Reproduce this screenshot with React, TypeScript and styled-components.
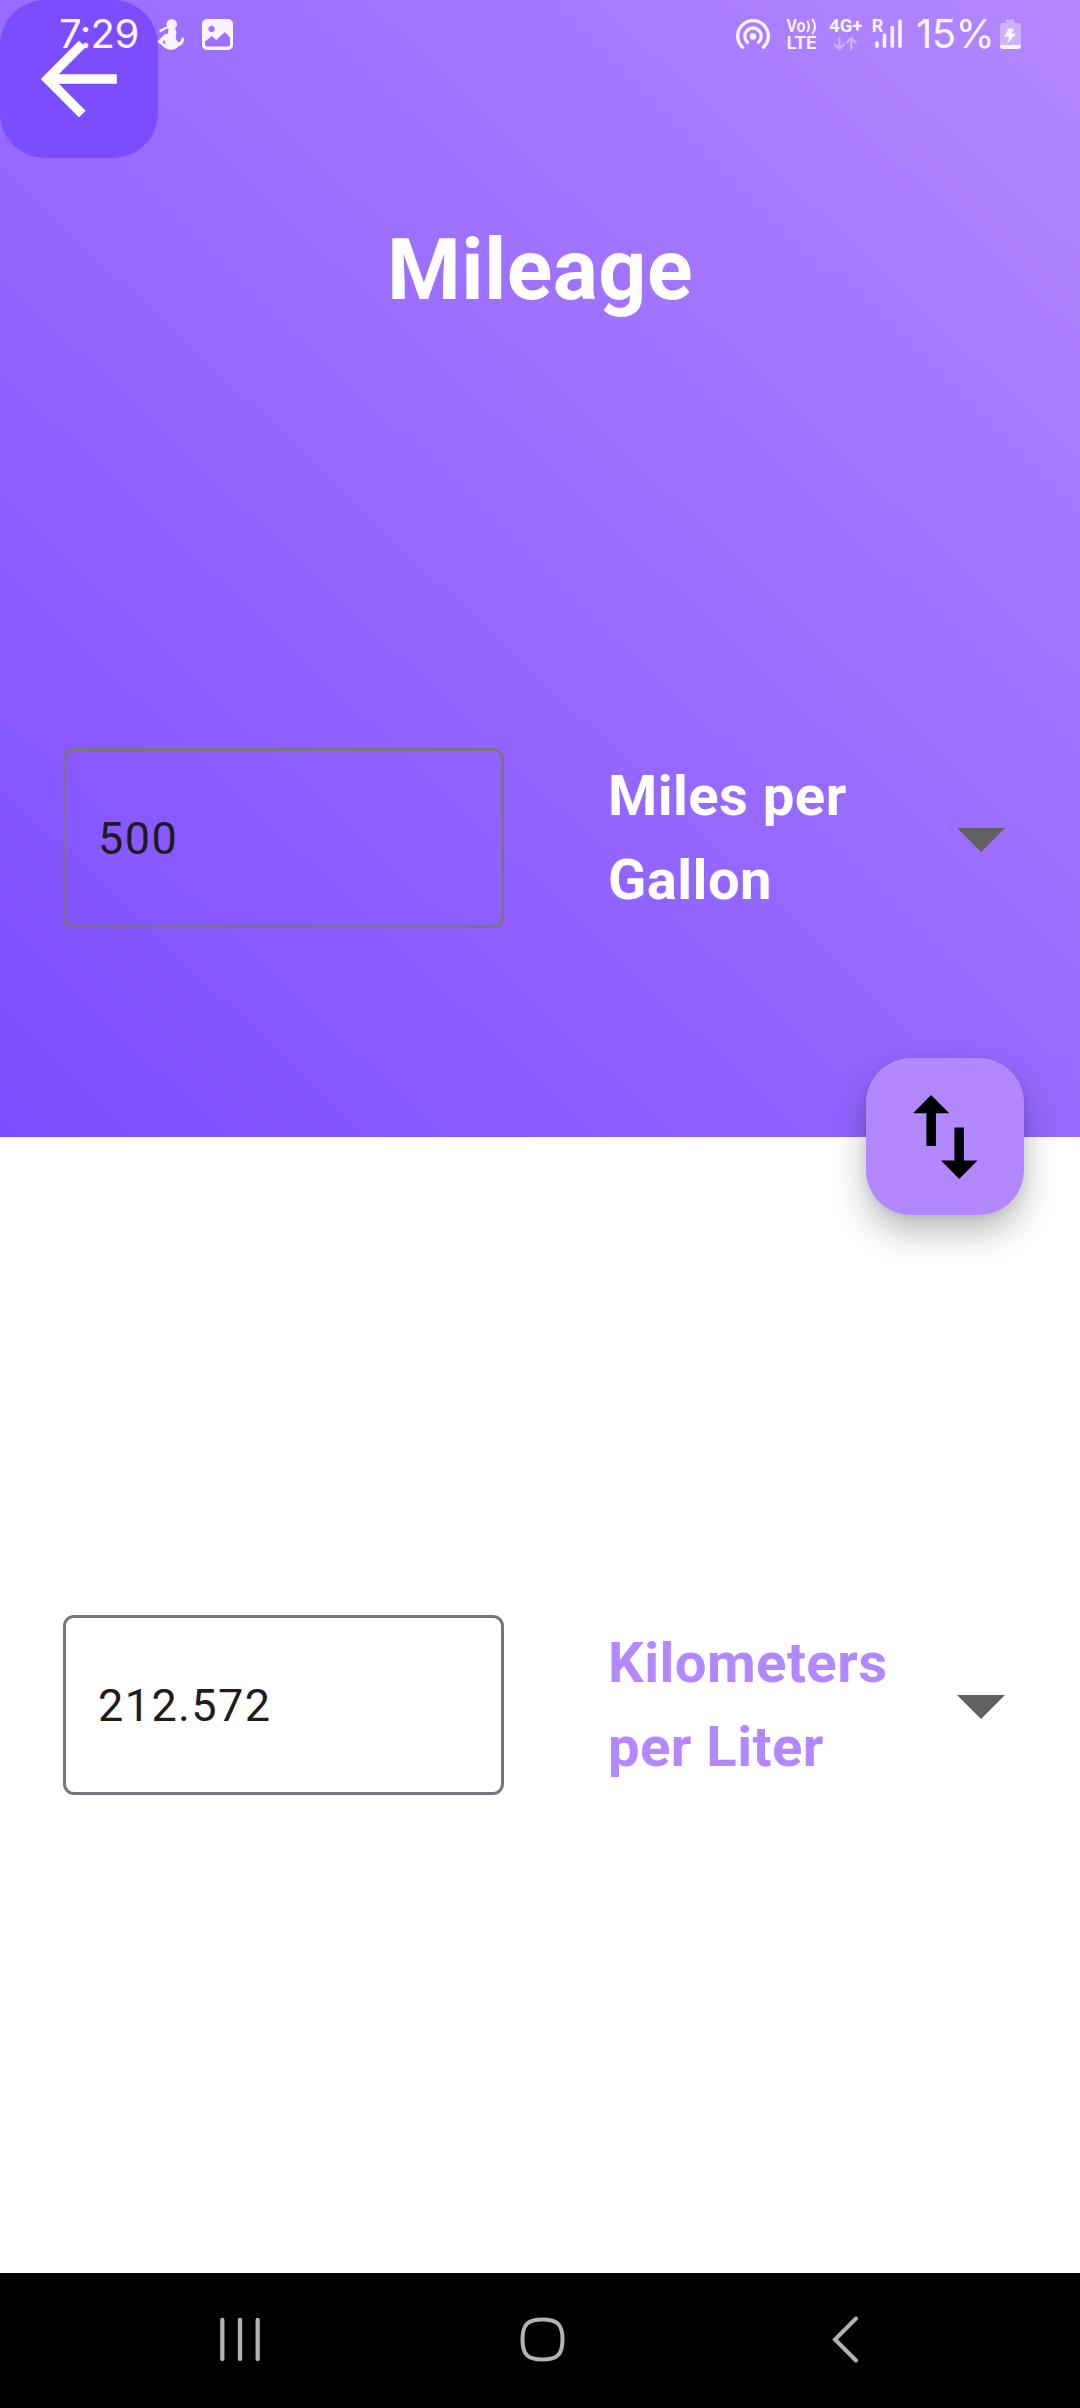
import React, { useState } from "react";
import styled, { createGlobalStyle } from "styled-components";

const GlobalStyle = createGlobalStyle`
  * { box-sizing: border-box; }
  body { margin: 0; background: #fff; }
  button { border: 0; padding: 0; background: none; cursor: pointer; font: inherit; letter-spacing: inherit; }
`;

const Screen = styled.div`
  position: relative;
  display: flex;
  flex-direction: column;
  width: 1080px;
  height: 2408px;
  overflow: hidden;
  background: #fff;
  font-family: Roboto, "Liberation Sans", sans-serif;
`;

const StatusBar = styled.header`
  position: absolute;
  z-index: 2;
  inset: 0 0 auto 0;
  height: 70px;
  display: flex;
  justify-content: space-between;
  padding: 0 57px 0 59px;
  color: #f9f4ff;
`;

const StatusGroup = styled.div`
  display: flex;
  align-items: flex-start;
`;

const StatusText = styled.span<{ $width: number }>`
  width: ${(p) => p.$width}px;
  padding-top: 10px;
  font-family: Inter, Roboto, sans-serif;
  font-size: 40px;
  line-height: 48px;
  letter-spacing: -0.6px;
  white-space: nowrap;
`;

const Glyph = styled.svg`
  display: block;
  flex: none;
  height: 70px;
`;

const Panel = styled.section<{ $tinted?: boolean }>`
  display: flex;
  flex-direction: column;
  flex: none;
  height: 1136.5px;
  background: ${(p) =>
    p.$tinted ? "linear-gradient(43.54deg, #7c4dff, #b388ff)" : "#fff"};
`;

const RoundButton = styled.button<{ $color: string }>`
  display: flex;
  align-items: center;
  justify-content: center;
  flex: none;
  width: 157.5px;
  height: 157.5px;
  border-radius: 45px;
  background: ${(p) => p.$color};
`;

const SwapButton = styled(RoundButton)`
  position: absolute;
  z-index: 1;
  top: 1057.75px;
  left: 866.25px;
  box-shadow:
    0 17px 34px rgba(0, 0, 0, 0.27),
    0 2px 8px rgba(0, 0, 0, 0.06);
`;

const Title = styled.h1`
  margin: 63px 0 0;
  color: #fff;
  font-size: 84.375px;
  line-height: 99px;
  font-weight: 700;
  letter-spacing: 0.42px;
  text-align: center;
`;

const UnitRow = styled.div<{ $top: number }>`
  display: flex;
  align-items: center;
  height: 180px;
  margin-top: ${(p) => p.$top}px;
  padding: 0 75px 0 63px;
`;

const ValueInput = styled.input`
  width: 441px;
  height: 180px;
  padding: 0 32px;
  border: 3px solid #79747e;
  border-radius: 11px;
  outline: 0;
  background: transparent;
  color: #1d1b20;
  font: 400 45px/68px Roboto, "Liberation Sans", sans-serif;
  letter-spacing: 1.4px;
`;

const UnitSelect = styled.button<{ $color: string }>`
  display: flex;
  align-items: center;
  justify-content: space-between;
  flex: 1;
  margin-left: 104px;
  color: ${(p) => p.$color};
  text-align: left;
`;

const UnitLabel = styled.span`
  width: 300px;
  font-size: 56.25px;
  line-height: 84.375px;
  font-weight: 700;
  letter-spacing: 0.42px;
`;

const Caret = styled.span`
  margin-top: 4px;
  border: 24.5px solid transparent;
  border-top-color: #616161;
  border-bottom: 0;
`;

const NavBar = styled.nav`
  display: flex;
  align-items: center;
  justify-content: space-between;
  flex: 1;
  padding: 0 205px 0 210px;
  background: #000;
`;

const NavButton = styled.button`
  display: flex;
`;

function FitnessIcon() {
  return (
    <Glyph width="30" viewBox="156 0 30 70" fill="currentColor">
      <circle cx="171.8" cy="24.3" r="5.2" />
      <path d="M160.500 31l5-3 3.500-.8" fill="none" stroke="currentColor" strokeWidth="2.200" strokeLinecap="round" />
      <path
        fillRule="evenodd"
        d="M168.500 28.500h6.500c1.700 2.400 1.700 5.200.8 7.700l.2 3.300c1.200.8 1.600 2.500 2.600 2.600 1.600 0 2.600-1.700 2.700-3.700.3-1.400 2.700-1.400 2.700.3 0 3.800-2 6.700-5.500 7.600-1.800 2.300-4.300 3.500-7.300 3.500-3.600 0-7-1.700-8.700-4l-5.300-4 7.200-7.300 3.400-.8zM162.600 42.200l3 2.400-1-4.800z"
      />
    </Glyph>
  );
}

function GalleryIcon() {
  return (
    <Glyph width="33" viewBox="201 0 33 70">
      <path
        fill="currentColor"
        fillRule="evenodd"
        d="M207 19h21a5 5 0 0 1 5 5v21a5 5 0 0 1-5 5h-21a5 5 0 0 1-5-5V24a5 5 0 0 1 5-5zm-2 22.500V44a2.500 2.500 0 0 0 2.500 2.500h20A2.500 2.500 0 0 0 230 44v-6.500l-4.500-5-1.300 0-8 7.500-4.500-4zM211.600 25.700a3.200 3.200 0 1 0 .01 0z"
      />
    </Glyph>
  );
}

function HotspotIcon() {
  return (
    <Glyph width="36" viewBox="735 0 36 70" fill="none" stroke="currentColor" strokeWidth="3.300" strokeLinecap="round">
      <circle cx="753" cy="36.500" r="3.300" fill="currentColor" stroke="none" />
      <path d="M747.500 42.300a8.200 8.200 0 1 1 11 0" />
      <path d="M742.600 47.200a15.300 15.300 0 1 1 20.800 0" />
    </Glyph>
  );
}

function VolteIcon() {
  return (
    <Glyph width="34" viewBox="785 0 34 70" fill="currentColor" fontFamily="Roboto, sans-serif" fontWeight="600">
      <text x="786.500" y="32" fontSize="17.500" textLength="19" lengthAdjust="spacingAndGlyphs">Vo</text>
      <path d="M807.500 21.500q3 5 0 10M812.500 19.500q5 7 0 14" fill="none" stroke="currentColor" strokeWidth="2" strokeLinecap="round" />
      <text x="786.500" y="49" fontSize="17.500" textLength="30" lengthAdjust="spacingAndGlyphs">LTE</text>
    </Glyph>
  );
}

function DataIcon() {
  return (
    <Glyph width="36" viewBox="828 0 36 70">
      <text x="829" y="32" fontSize="17.500" fontFamily="Roboto, sans-serif" fontWeight="700" fill="currentColor" textLength="33.500" lengthAdjust="spacingAndGlyphs">4G+</text>
      <path
        d="M839.300 38v11M834.800 44.500l4.500 4.500 4.500-4.500M851.300 49V38M846.800 42.500l4.500-4.500 4.500 4.500"
        fill="none" stroke="currentColor" strokeWidth="2.400" strokeLinecap="round" opacity=".42"
      />
    </Glyph>
  );
}

function SignalIcon() {
  return (
    <Glyph width="33" viewBox="871 0 33 70">
      <text x="871.800" y="32" fontSize="18" fontFamily="Roboto, sans-serif" fontWeight="700" fill="currentColor">R</text>
      <path d="M877 43v3.200M884.500 35v11.200M892.300 27.500v18.700M900 21v25.200" stroke="currentColor" strokeWidth="3.600" strokeLinecap="round" />
    </Glyph>
  );
}

function BatteryIcon() {
  return (
    <Glyph width="23" viewBox="1000 0 23 70" fill="currentColor">
      <path d="M1006 19.500h8.500v3.500h3.500a3 3 0 0 1 3 3v19h-21V26a3 3 0 0 1 3-3h3z" opacity=".4" />
      <path d="M1000 45h21v1a3 3 0 0 1-3 3h-15a3 3 0 0 1-3-3z" />
      <path d="M1008.200 28.500h5.500l-2 5.200h4l-8.500 10 1.800-7h-4.500z" />
    </Glyph>
  );
}

function BackArrow() {
  return (
    <svg width="76" height="76" viewBox="0 0 76 76" fill="none">
      <path d="M75.800 38H6M41.300 3L6.500 38l34.800 35" stroke="#fff" strokeWidth="9.400" />
    </svg>
  );
}

function SwapArrows() {
  return (
    <svg width="66" height="86" viewBox="0 0 66 86" fill="#000">
      <path d="M19 1L37.300 19.300H24V52h-9.600V19.300H1z" />
      <path d="M47.200 85L29 66.500h13.400V33.500H52v33h13.500z" />
    </svg>
  );
}

type UnitFieldProps = {
  top: number;
  value: string;
  label: string;
  color: string;
  onChange: (v: string) => void;
};

function UnitField({ top, value, label, color, onChange }: UnitFieldProps) {
  return (
    <UnitRow $top={top}>
      <ValueInput value={value} onChange={(e) => onChange(e.target.value)} />
      <UnitSelect $color={color}>
        <UnitLabel>{label}</UnitLabel>
        <Caret />
      </UnitSelect>
    </UnitRow>
  );
}

export default function App() {
  const [from, setFrom] = useState("500");
  const [to, setTo] = useState("212.572");

  return (
    <>
      <GlobalStyle />
      <Screen>
        <StatusBar>
          <StatusGroup>
            <StatusText $width={97}>7:29</StatusText>
            <FitnessIcon />
            <Glyph width="15" />
            <GalleryIcon />
          </StatusGroup>
          <StatusGroup>
            <HotspotIcon />
            <Glyph width="14" />
            <VolteIcon />
            <Glyph width="9" />
            <DataIcon />
            <Glyph width="7" />
            <SignalIcon />
            <Glyph width="12" />
            <StatusText $width={84}>15%</StatusText>
            <BatteryIcon />
          </StatusGroup>
        </StatusBar>

        <Panel $tinted>
          <RoundButton $color="#7c4dff" aria-label="Back">
            <BackArrow />
          </RoundButton>
          <Title>Mileage</Title>
          <UnitField top={428.5} value={from} label="Miles per Gallon" color="#fff" onChange={setFrom} />
        </Panel>

        <Panel>
          <UnitField top={478.5} value={to} label="Kilometers per Liter" color="#b388ff" onChange={setTo} />
        </Panel>

        <SwapButton $color="#b388ff" aria-label="Swap units">
          <SwapArrows />
        </SwapButton>

        <NavBar>
          <NavButton aria-label="Recent apps">
            <svg width="60" height="60" viewBox="210 2310.5 60 60" stroke="#b3b3b3" strokeWidth="4.300" strokeLinecap="round">
              <path d="M222.300 2319.500v39M240 2319.500v39M257.700 2319.500v39" />
            </svg>
          </NavButton>
          <NavButton aria-label="Home">
            <svg width="60" height="60" viewBox="512.5 2310.5 60 60" fill="none" stroke="#b3b3b3" strokeWidth="4">
              <path d="M542 2319c15 0 20 5 20 20s-5 20-20 20-20-5-20-20 5-20 20-20z" />
            </svg>
          </NavButton>
          <NavButton aria-label="Back">
            <svg width="60" height="60" viewBox="815 2310.5 60 60" fill="none" stroke="#b3b3b3" strokeWidth="4" strokeLinecap="round">
              <path d="M856 2318l-21 21 21 21" />
            </svg>
          </NavButton>
        </NavBar>
      </Screen>
    </>
  );
}
